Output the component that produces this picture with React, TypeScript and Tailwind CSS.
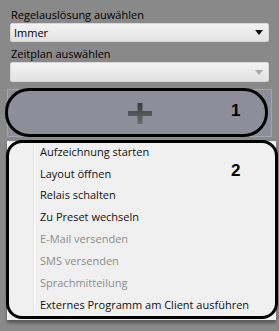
import React from "react";

const items: { label: string; disabled?: boolean }[] = [
  { label: "Aufzeichnung starten" },
  { label: "Layout öffnen" },
  { label: "Relais schalten" },
  { label: "Zu Preset wechseln" },
  { label: "E-Mail versenden", disabled: true },
  { label: "SMS versenden", disabled: true },
  { label: "Sprachmitteilung", disabled: true },
  { label: "Externes Programm am Client ausführen" },
];

function Combo({ value, disabled }: { value?: string; disabled?: boolean }) {
  return (
    <div className="flex h-full items-center justify-between rounded-[2px] border border-[#d8d8d8] bg-gradient-to-b from-[#f4f4f4] to-[#e2e2e2] pl-[3px] pr-[5px]">
      <span className="text-[11px] leading-none text-black">{value}</span>
      <svg width="8" height="5" viewBox="0 0 8 5">
        <path d="M0 0h8L4 5z" fill={disabled ? "#a9a9a9" : "#111"} />
      </svg>
    </div>
  );
}

export default function App() {
  return (
    <div
      className="relative h-[331px] w-[279px] overflow-hidden bg-[#898989]"
      style={{ fontFamily: '"Open Sans", "Noto Sans", sans-serif' }}
    >
      <div className="flex flex-col px-[10px] pt-[7px]">
        <span className="pl-[1px] text-[11px] leading-[15px] text-black">Regelauslösung auwählen</span>
        <div className="mt-[1px] h-[19px]">
          <Combo value="Immer" />
        </div>
        <span className="mt-[4px] pl-[1px] text-[11px] leading-[15px] text-black">Zeitplan auswählen</span>
        <div className="mt-[1px] h-[20px]">
          <Combo disabled />
        </div>
      </div>

      {/* add button */}
      <div className="mx-[7px] mt-[7px] flex h-[48px] items-center justify-center border border-[#a3a4ad] bg-[#8d8e99]">
        <svg width="24" height="21" viewBox="0 0 24 21">
          <defs>
            <linearGradient id="pg" x1="0" y1="0" x2="0" y2="1">
              <stop offset="0" stopColor="#3c3c3c" />
              <stop offset="1" stopColor="#6a6a6a" />
            </linearGradient>
          </defs>
          <path d="M9.5 0h5v8h9.5v5h-9.5v8h-5v-8H0V8h9.5z" fill="url(#pg)" />
        </svg>
      </div>

      {/* context menu */}
      <div className="ml-[7px] mr-[3px] mt-[4px] flex h-[179px] bg-[#f0f0f0] shadow-[0_3px_3px_rgba(0,0,0,0.35)]">
        <div className="w-[27px] shrink-0 border-r border-r-[#e2e2e2]" />
        <div className="w-[1px] shrink-0 bg-white" />
        <div className="flex flex-col pl-[5px]">
          {items.map((it) => (
            <div
              key={it.label}
              className={`flex h-[21.9px] items-center text-[11px] ${
                it.disabled ? "text-[#8d8d8d]" : "text-[#111]"
              }`}
            >
              {it.label}
            </div>
          ))}
        </div>
      </div>

      {/* annotation 1 */}
      <div className="absolute left-[5px] top-[88px] h-[49px] w-[263px] rounded-[24px] border-[3px] border-black" />
      <span
        className="absolute left-[231px] top-[102px] text-[17px] font-bold leading-none text-black"
        style={{ fontFamily: '"Liberation Sans", Arial, sans-serif' }}
      >
        1
      </span>

      {/* annotation 2 */}
      <div className="absolute left-[6px] top-[140px] h-[179px] w-[272px] rounded-[16px] border-[3px] border-black" />
      <span
        className="absolute left-[231px] top-[162px] text-[17px] font-bold leading-none text-black"
        style={{ fontFamily: '"Liberation Sans", Arial, sans-serif' }}
      >
        2
      </span>
    </div>
  );
}
